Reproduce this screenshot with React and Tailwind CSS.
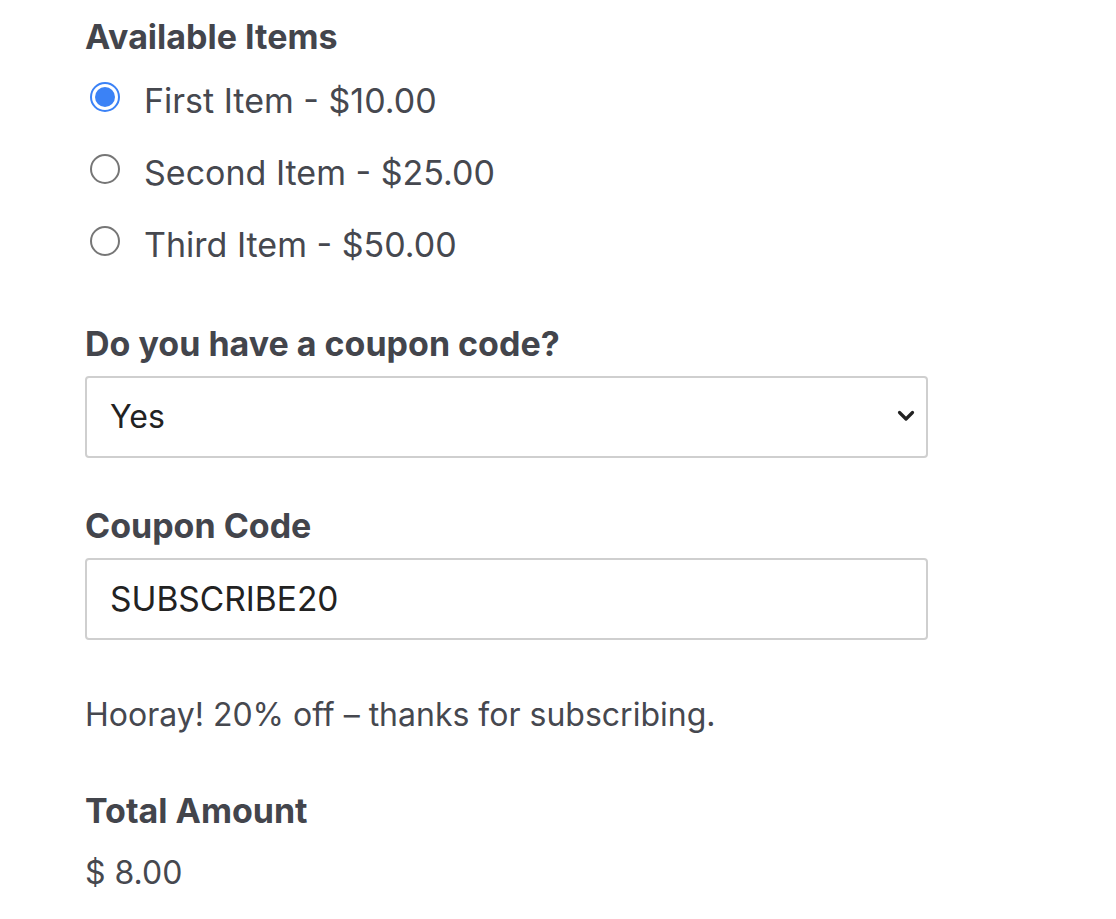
import React, { useState } from 'react';

const items = [
  { id: 'first', label: 'First Item - $10.00' },
  { id: 'second', label: 'Second Item - $25.00' },
  { id: 'third', label: 'Third Item - $50.00' },
];

const App = () => {
  const [selected, setSelected] = useState('first');
  const [coupon, setCoupon] = useState('yes');
  const [code, setCode] = useState('SUBSCRIBE20');

  return (
    <div className="min-h-screen bg-white pl-[85px] pt-[17px] text-[#46484f]" style={{ fontFamily: 'Inter, "Noto Sans", sans-serif' }}>
      <div className="w-[843px] flex flex-col">
        <h2 className="text-[34px] leading-[40px] font-bold text-[#43454c]">Available Items</h2>

        <div className="mt-[8px] flex flex-col">
          {items.map((item) => (
            <label key={item.id} className="h-[72px] flex items-center gap-[24px] cursor-pointer">
              <span className="-translate-y-1 ml-[5px]">
                {selected === item.id ? (
                  <span className="w-[30px] h-[30px] rounded-full border-2 border-[#3b82f6] flex items-center justify-center">
                    <span className="w-[20px] h-[20px] rounded-full bg-[#3b82f6]" />
                  </span>
                ) : (
                  <span className="block w-[30px] h-[30px] rounded-full border-2 border-[#767676]" />
                )}
              </span>
              <input type="radio" className="hidden" checked={selected === item.id} onChange={() => setSelected(item.id)} />
              <span className="text-[34px] leading-[40px]">{item.label}</span>
            </label>
          ))}
        </div>

        <label className="mt-[43px] text-[34px] leading-[40px] font-bold text-[#43454c]">Do you have a coupon code?</label>
        <div className="relative mt-[12px]">
          <select
            value={coupon}
            onChange={(e) => setCoupon(e.target.value)}
            className="appearance-none w-full h-[82px] border-2 border-[#cfcfcf] rounded-[4px] bg-white pl-[23px] text-[32px] text-[#222] outline-none"
          >
            <option value="yes">Yes</option>
            <option value="no">No</option>
          </select>
          <svg className="absolute right-[13px] top-[34px] pointer-events-none" width="18" height="12" viewBox="0 0 18 12" fill="none">
            <path d="M2.5 2.5 9 9l6.5-6.5" stroke="#222" strokeWidth="3.2" strokeLinecap="round" strokeLinejoin="round" />
          </svg>
        </div>

        <label className="mt-[48px] text-[34px] leading-[40px] font-bold text-[#43454c]">Coupon Code</label>
        <input
          value={code}
          onChange={(e) => setCode(e.target.value)}
          className="mt-[12px] w-full h-[82px] border-2 border-[#cfcfcf] rounded-[4px] bg-white pl-[23px] text-[33.5px] text-[#222] outline-none"
        />

        <p className="mt-[55px] text-[32px] leading-[40px]">Hooray! 20% off – thanks for subscribing.</p>

        <h3 className="mt-[56px] text-[34px] leading-[40px] font-bold text-[#43454c]">Total Amount</h3>
        <p className="mt-[22px] text-[32px] leading-[40px]">$ 8.00</p>
      </div>
    </div>
  );
};

export default App;
